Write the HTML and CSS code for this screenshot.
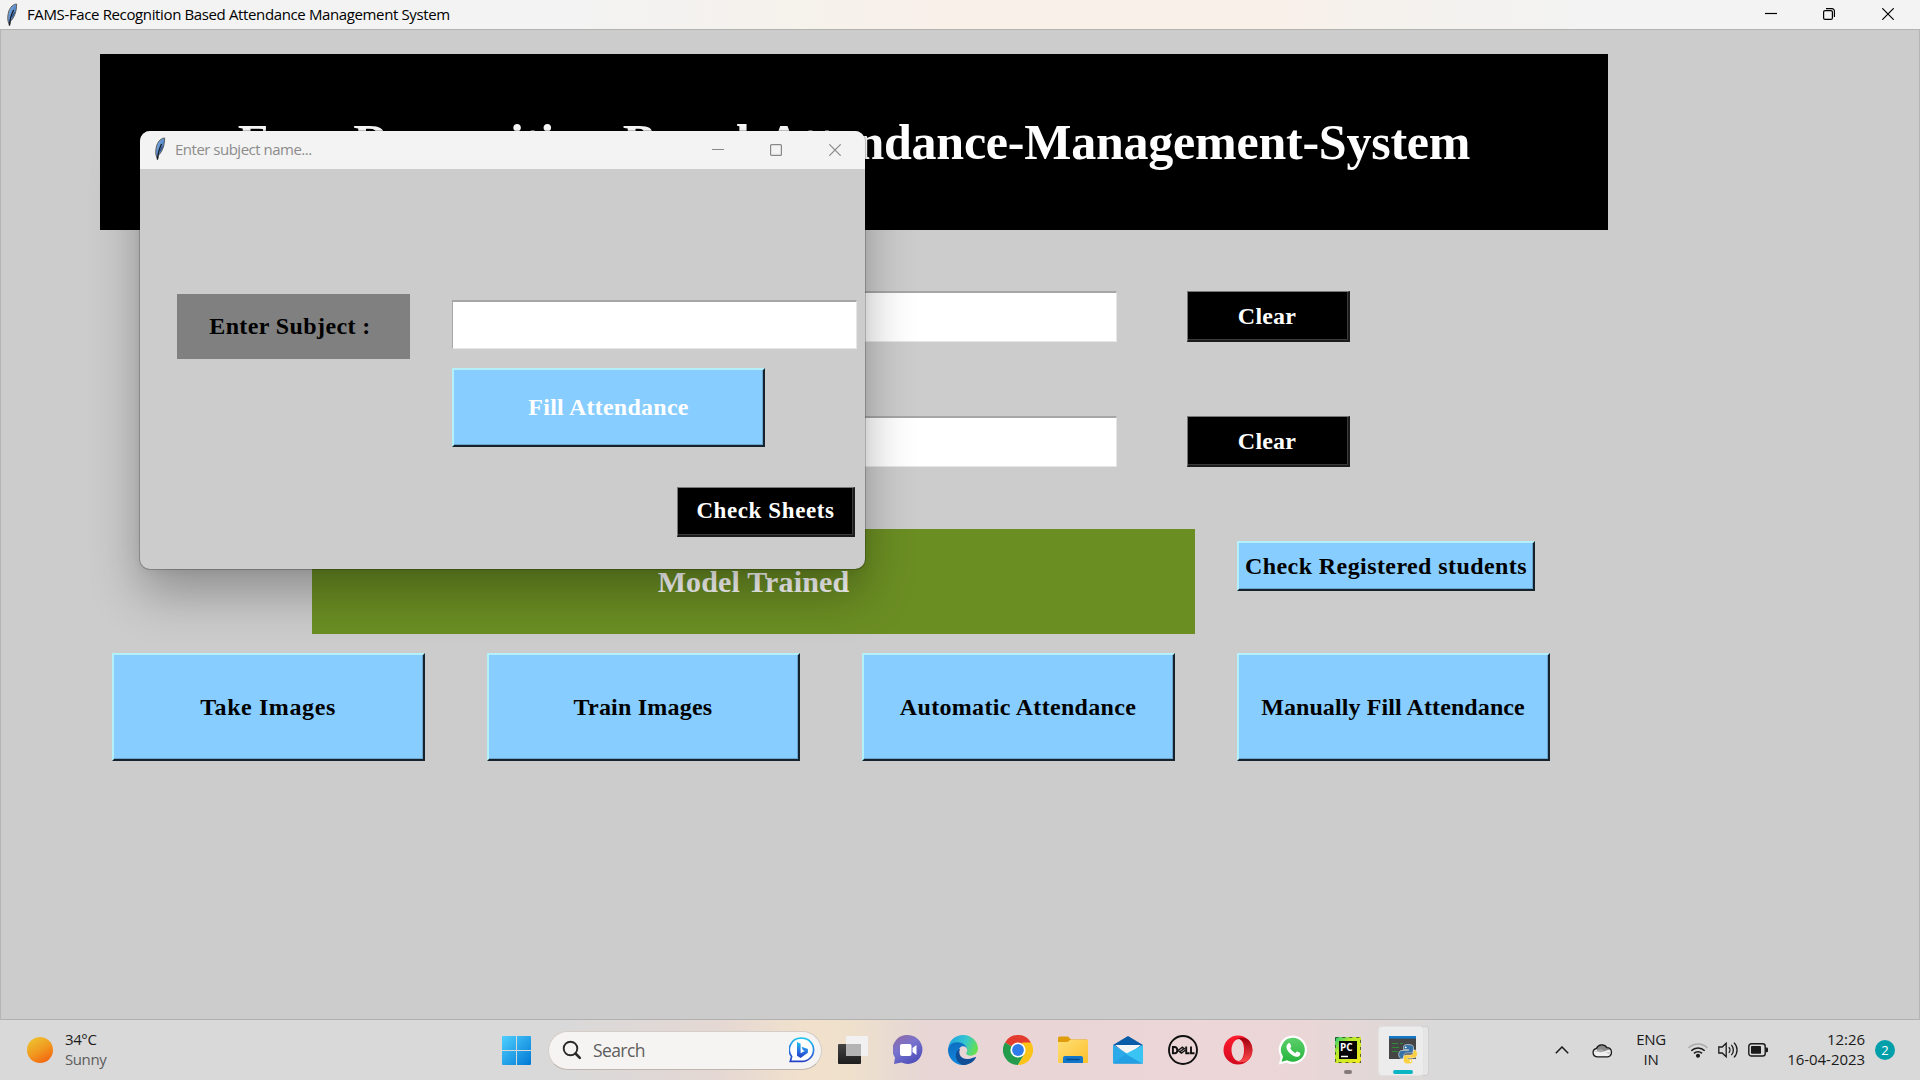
FILE: index.html
```html
<!DOCTYPE html>
<html lang="en">
<head>
<meta charset="utf-8">
<title>FAMS-Face Recognition Based Attendance Management System</title>
<link rel="stylesheet" href="styles.css">
</head>
<body>
<svg width="0" height="0" class="defs" aria-hidden="true">
  <defs>
    <linearGradient id="quill" x1="0" y1="0" x2="1" y2="1"><stop offset="0" stop-color="#8db8e8"/><stop offset="1" stop-color="#2a62ad"/></linearGradient>
    <symbol id="feather" viewBox="0 0 12 24">
      <path d="M10.600 1C7.500 1 4.300 4 2.900 8 1.800 11.500 1.400 15 2 18L3.400 22.500l1.200-4.400C7.700 15.500 10.900 8.500 10.600 1z" fill="url(#quill)" stroke="#555" stroke-width=".9"/>
      <path d="M7.600 7C5.500 11 4 15 3.500 22.500" fill="none" stroke="#161b26" stroke-width="1.300"/>
      <path d="M8.500 9.500 6 14" stroke="#1c3a66" stroke-width=".9"/>
    </symbol>
  </defs>
</svg>
<div class="desktop">
  <header class="titlebar">
    <svg class="feather" width="12" height="24"><use href="#feather"/></svg>
    <span class="titlebar-text">FAMS-Face Recognition Based Attendance Management System</span>
    <div class="controls">
      <svg width="12" height="12" viewBox="0 0 12 12"><path d="M0 5.500h12"/></svg>
      <svg width="12" height="12" viewBox="0 0 12 12"><rect x=".6" y="2.600" width="8.800" height="8.800" rx="1.500"/><path d="M3 .6h6a2.400 2.400 0 0 1 2.400 2.400v6"/></svg>
      <svg width="12" height="12" viewBox="0 0 12 12"><path d="M.3.3l11.400 11.400M11.700.3.3 11.700"/></svg>
    </div>
  </header>

  <main class="app">
    <h1 class="banner"><span>Face-Recognition-Based-Attendance-Management-System</span></h1>
    <div class="entry-row first"><div class="entry"></div><button class="btn dark clear">Clear</button></div>
    <div class="entry-row second"><div class="entry"></div><button class="btn dark clear">Clear</button></div>
    <div class="status-row">
      <div class="status">Model Trained</div>
      <button class="btn sky registered">Check Registered students</button>
    </div>
    <div class="actions">
      <button class="btn sky take">Take Images</button>
      <button class="btn sky train">Train Images</button>
      <button class="btn sky auto">Automatic Attendance</button>
      <button class="btn sky manual">Manually Fill Attendance</button>
    </div>
  </main>

  <section class="dialog">
    <div class="dialog-bar">
      <svg class="feather" width="12" height="24"><use href="#feather"/></svg>
      <span class="dialog-title">Enter subject name...</span>
      <div class="controls">
        <svg width="12" height="12" viewBox="0 0 12 12"><path d="M0 5.500h12"/></svg>
        <svg width="12" height="12" viewBox="0 0 12 12"><rect x=".6" y=".6" width="10.800" height="10.800" rx="1"/></svg>
        <svg width="12" height="12" viewBox="0 0 12 12"><path d="M.3.3l11.400 11.400M11.700.3.3 11.700"/></svg>
      </div>
    </div>
    <div class="dialog-body">
      <div class="field"><label class="subject">Enter Subject :</label><div class="entry small"></div></div>
      <button class="btn sky fill">Fill Attendance</button>
      <button class="btn dark sheets">Check Sheets</button>
    </div>
  </section>

  <footer class="taskbar">
    <div class="weather">
      <div class="sun"></div>
      <div class="lines"><span>34°C</span><span class="muted">Sunny</span></div>
    </div>
    <div class="dock">
      <div class="cell start">
        <svg width="29" height="29" viewBox="0 0 29 29"><defs><linearGradient id="win" x1="0" y1="0" x2="1" y2="1" gradientUnits="objectBoundingBox"><stop offset="0" stop-color="#4fd0ff"/><stop offset="1" stop-color="#0078d4"/></linearGradient></defs><path fill="url(#win)" d="M1 0h13v14H0V1a1 1 0 0 1 1-1zM15 0h13a1 1 0 0 1 1 1v13H15zM0 15h14v14H1a1 1 0 0 1-1-1zM15 15h14v13a1 1 0 0 1-1 1H15z"/></svg>
      </div>
      <div class="search">
        <svg width="20" height="20" viewBox="0 0 20 20" fill="none" stroke="#2a2a2a" stroke-linecap="round"><circle cx="8.500" cy="8.500" r="6.800" stroke-width="1.900"/><path d="M13.500 13.500l4.300 4.300" stroke-width="2.600"/></svg>
        <span>Search</span>
        <svg class="bing" width="26" height="26" viewBox="0 0 26 26"><defs><linearGradient id="bing" x1=".5" y1="0" x2=".4" y2="1"><stop offset="0" stop-color="#22c5ee"/><stop offset=".6" stop-color="#2a6fe0"/><stop offset="1" stop-color="#2440c4"/></linearGradient></defs><path d="M13 1.200a11.600 11.600 0 1 1 0 23.200H1.300l1.300-4.800A11.600 11.600 0 0 1 13 1.200z" fill="#fff" stroke="url(#bing)" stroke-width="1.700"/><path d="M8 5l3.600 1.400v9.900L15.800 14l-2-1-1.200-3.200 6.300 2.300v3.700L11.600 21 8 18.700z" fill="url(#bing)"/></svg>
      </div>
      <div class="cell"><svg width="30" height="30" viewBox="0 0 30 30"><defs><linearGradient id="tv" x1="0" y1="0" x2="0" y2="1"><stop offset="0" stop-color="#444"/><stop offset="1" stop-color="#1d1d1d"/></linearGradient></defs><rect x="0" y="9" width="23" height="20" rx="1" fill="url(#tv)"/><rect x="8" y="1" width="22" height="20" rx="1" fill="#f1f1f1"/><path d="M8 9h15v12H8z" fill="#b4b4b4"/></svg></div>
      <div class="cell"><svg width="30" height="30" viewBox="0 0 30 30"><defs><linearGradient id="chat" x1=".2" y1="0" x2=".8" y2="1"><stop offset="0" stop-color="#8e6aa8"/><stop offset=".4" stop-color="#7873cf"/><stop offset="1" stop-color="#494bb8"/></linearGradient></defs><path d="M15 0a14.500 14.500 0 1 1-6.500 27.500L1 29l1-6.500A14.500 14.500 0 0 1 15 0z" fill="url(#chat)"/><rect x="7" y="9" width="11.500" height="12" rx="2" fill="#fff"/><path d="M19.500 13l4-3v10l-4-3z" fill="#fff"/></svg></div>
      <div class="cell"><svg width="30" height="30" viewBox="0 0 30 30"><defs><linearGradient id="ed1" x1="0" y1=".2" x2="1" y2=".5"><stop offset="0" stop-color="#1e9fe0"/><stop offset=".55" stop-color="#36c6d0"/><stop offset="1" stop-color="#66e04e"/></linearGradient><linearGradient id="ed2" x1="0" y1="0" x2=".3" y2="1"><stop offset="0" stop-color="#0d6abf"/><stop offset="1" stop-color="#1188dc"/></linearGradient></defs><path d="M.3 12.500C1.500 5 7.500 0 15 0c8.600 0 15 6.400 15 13.600 0 4.400-3.500 7.100-7.200 7.100-3.300 0-5-1.400-4.600-2.400.6-1 1-1.700 1-3.200 0-3.600-4-6.600-8.600-6.600C6 8.500 1.500 10.200.3 12.500z" fill="url(#ed1)"/><path d="M0 15C0 10.800 4.200 7.300 9.500 7.300c5 0 9 3 9.600 6.700-.8-2-2.500-2.700-3.900-2.700-3 0-4.700 2.600-4.700 5.700 0 6 5.200 10 10 9.800-1.700 2-3.700 3.200-5.700 3.200C6.500 30 0 23 0 15z" fill="url(#ed2)"/><path d="M12.300 13.500c-3 6 1.500 11 7.700 10.500 3.200-.3 6-1.400 7.300-2 .6-.2.900.2.600.7-2.300 4.200-7 7.300-12.900 7.300-4.500-1.200-7.600-5.500-7.200-10 .3-3 2-5.500 4.500-6.500z" fill="#104f98"/></svg></div>
      <div class="cell"><svg width="30" height="30" viewBox="0 0 30 30"><path d="M15 15 2 7.500A15 15 0 0 1 28 7.500z" fill="#e33b2e"/><path d="M15 15 2 7.500A15 15 0 0 0 15 30l6.500-11.200z" fill="#259b4c"/><path d="M28 7.500A15 15 0 0 1 15 30l7-12-3-10.500z" fill="#fcc419"/><circle cx="15" cy="15" r="7.600" fill="#fff"/><circle cx="15" cy="15" r="5.900" fill="#2f7bea"/></svg></div>
      <div class="cell"><svg width="30" height="28" viewBox="0 0 30 28"><defs><linearGradient id="fo" x1="0" y1="0" x2="1" y2="1"><stop offset="0" stop-color="#ffdf75"/><stop offset="1" stop-color="#fbc02d"/></linearGradient></defs><path d="M0 2q0-1.500 1.500-1.500H10l3 3h15.500Q30 3.500 30 5v6H0z" fill="#df9c0b"/><path d="M0 6h9.500l3-2.300H29q1 0 1 1V26q0 1-1 1H1q-1 0-1-1z" fill="url(#fo)"/><path d="M5 27v-5q0-2 2-2h16q2 0 2 2v5z" fill="#1277cb"/><path d="M8.500 23.500h13" stroke="#074a86" stroke-width="1.500"/></svg></div>
      <div class="cell"><svg width="30" height="28" viewBox="0 0 30 28"><path d="M0 9 15 0l15 9-15 9z" fill="#0a5ba8"/><path d="M2 9h26l-13 10z" fill="#f5f5f5"/><path d="M0 9l30 18.500H1q-1 0-1-1z" fill="#2aaae8"/><path d="M30 9v17.500q0 1-1 1L12.500 18z" fill="#39c4f3"/><path d="M12.500 18 30 28H0z" fill="#1f98e0" opacity=".6"/></svg></div>
      <div class="cell"><svg width="30" height="30" viewBox="0 0 30 30" fill="none" stroke="#111"><circle cx="15" cy="15" r="14" stroke-width="1.900"/><g stroke-width="1.900"><path d="M4.900 12v6.300h1.600q2.800 0 2.800-3.150T6.500 12zM18.200 11.500v6.800h3.400M23 11.500v6.800h3.500"/><path d="M10 15.500l4.600-3.500M11.600 17l4.600-3.500M13 18.500l4.500-3.500M10 15.500l3.500 2.700M14 12l3 2" stroke-width="1.500"/></g></svg></div>
      <div class="cell"><svg width="30" height="30" viewBox="0 0 30 30"><defs><linearGradient id="op" x1="0" y1="0" x2="0" y2="1"><stop offset="0" stop-color="#ff1b2d"/><stop offset="1" stop-color="#d3091e"/></linearGradient><linearGradient id="op2" x1="0" y1="0" x2="0" y2="1"><stop offset="0" stop-color="#a00010"/><stop offset="1" stop-color="#ff4b4b"/></linearGradient></defs><path fill="url(#op)" fill-rule="evenodd" d="M15 .5a14.500 14.500 0 1 0 0 29 14.500 14.500 0 0 0 0-29zM15.500 4c3.500 0 5.500 5 5.500 11s-2 11-5.500 11S8.500 21 8.500 15s3.500-11 7-11z"/><path fill="url(#op2)" d="M12.500 5q2-2 5-2.200 7-.3 9.500 4 2.300 3.700 2.300 8.200T27 23q-3 4.300-9.500 4.300-3 0-5-2.300 2 1.300 4 1 5.500-2 5.500-11t-5.500-11q-2-.3-4 1z"/></svg></div>
      <div class="cell"><svg width="30" height="30" viewBox="0 0 30 30"><defs><linearGradient id="wa" x1="0" y1="0" x2="0" y2="1"><stop offset="0" stop-color="#5dd06a"/><stop offset="1" stop-color="#27b43e"/></linearGradient></defs><path d="M15 .5A14.300 14.300 0 1 1 8.500 27.700L.8 29.500l2-7.300A14.300 14.300 0 0 1 15 .5z" fill="#fff"/><path d="M15 2.800A12 12 0 1 1 9 25.300L3.600 26.700 5 21.500A12 12 0 0 1 15 2.800z" fill="url(#wa)"/><path d="M10.500 8.300c.8-.5 1.400-.2 1.700.5l1 2.300c.2.700-.2 1.200-1 2 1.200 2.400 3 4 5.300 5 .8-1 1.200-1.800 1.900-1.500l2.500 1.200c1 .5.300 2.800-.9 3.500-1.500.9-3.600.7-6.500-1-3-1.700-5.300-4.700-5.900-7-.5-2 .5-4.100 1.900-5z" fill="#fff"/></svg></div>
      <div class="cell open"><svg width="26" height="26" viewBox="0 0 26 26"><defs><linearGradient id="py" x1="0" y1="0" x2="1" y2="1"><stop offset="0" stop-color="#27c97a"/><stop offset=".35" stop-color="#b9e92c"/><stop offset="1" stop-color="#f4ea1e"/></linearGradient></defs><path d="M0 0h26v26H0z" fill="url(#py)"/><path d="M.3.3h25.400v25.400H.3z" fill="none" stroke="#15201a" stroke-width=".8" stroke-dasharray="3 4"/><path d="M4 4h18v18H4z" fill="#050505"/><path d="M6 19.500h7" stroke="#fff" stroke-width="1.500"/><text x="5" y="13.500" class="pc">PC</text></svg></div>
      <div class="cell active"><svg width="29" height="28" viewBox="0 0 29 28"><path d="M0 0h27v23H0z" fill="#454545"/><path d="M0 0h27v2.500H0z" fill="#1479ca"/><path d="M3 7.500h6M11 7.500h3M3 11.500h7M3 15.500h6" stroke="#2f8a35" stroke-width="1.200"/><path d="M18.500 8.500c-3.500 0-4 1.500-4 3v2h5v1h-6.500c-2.400 0-3.300 1.800-3.300 4s1 4 3 4h2v-2.500c0-2 1.500-3 3.200-3h4c1.600 0 2.600-1.200 2.600-2.700v-3c0-1.700-1.500-2.800-6-2.800z" fill="#3672a6" stroke="#eee" stroke-width=".6"/><path d="M19.500 27.800c3.500 0 4-1.400 4-2.900v-2h-5v-1H25c2.400 0 3.300-1.700 3.300-3.900s-1-4-3-4h-1v2c0 2-1.500 3-3.200 3h-4c-1.600 0-2.600 1.200-2.600 2.700v3c0 1.900 1.500 3.100 5 3.100z" fill="#fcd03f" stroke="#eee" stroke-width=".6"/><circle cx="16.700" cy="11.300" r=".9" fill="#fff"/><circle cx="21.500" cy="25" r=".9" fill="#fff"/></svg></div>
    </div>
    <div class="tray">
      <svg class="chev" width="14" height="8" viewBox="0 0 14 8"><path d="M.8 7.200 7 1l6.200 6.200" fill="none" stroke="#1a1a1a" stroke-width="1.500"/></svg>
      <svg class="cloud" width="21" height="15" viewBox="0 0 21 15"><path d="M5 13.800a4.200 4.200 0 0 1-.6-8.300A6 6 0 0 1 15 4.700a4.600 4.600 0 0 1 .8 9.100z" fill="#f0f0f0"/><path d="M4.400 5.500A6 6 0 0 1 15 4.700l3.500 1.500-10 3-3-1z" fill="#8a8a8a"/><path d="M1 9l8-3 9 6V9z" fill="#bbb" opacity=".6"/><path d="M5 13.800a4.200 4.200 0 0 1-.6-8.300A6 6 0 0 1 15 4.700a4.600 4.600 0 0 1 .8 9.100z" fill="none" stroke="#1a1a1a" stroke-width="1.300"/></svg>
      <div class="lines lang"><span>ENG</span><span>IN</span></div>
      <svg class="wifi" width="20" height="16" viewBox="0 0 20 16" fill="none" stroke="#1a1a1a" stroke-width="1.500"><path d="M.6 6a13.300 13.300 0 0 1 18.800 0" stroke="#aaa"/><path d="M3.300 8.700a9.500 9.500 0 0 1 13.400 0M6 11.400a5.700 5.700 0 0 1 8 0"/><circle cx="10" cy="13.700" r="1.300" fill="#1a1a1a"/></svg>
      <svg class="vol" width="21" height="18" viewBox="0 0 21 18" fill="none" stroke="#1a1a1a" stroke-width="1.300"><path d="M.8 6h3.400l4-3.800v13.600l-4-3.800H.8zM10.800 6.200a4 4 0 0 1 0 5.600M13.300 3.900a7.300 7.300 0 0 1 0 10.200M16 1.600a10.500 10.500 0 0 1 0 14.800"/></svg>
      <svg class="bat" width="21" height="14" viewBox="0 0 21 14"><rect x=".8" y=".8" width="16.400" height="12.200" rx="2.600" fill="none" stroke="#1a1a1a" stroke-width="1.400"/><rect x="3" y="3" width="10" height="7.800" rx=".8" fill="#1a1a1a"/><path d="M17.500 4.500h1.200q1.300 0 1.300 1.200v2.400q0 1.200-1.300 1.200h-1.200z" fill="#1a1a1a"/></svg>
      <div class="lines clock"><span>12:26</span><span>16-04-2023</span></div>
      <div class="badge">2</div>
    </div>
  </footer>
</div>
</body>
</html>
```

FILE: styles.css
```css
* { box-sizing: border-box; }
body { margin: 0; font-family: "Open Sans", "Noto Sans", sans-serif; }
.defs { position: absolute; }
.desktop {
  position: relative; width: 1920px; height: 1080px; overflow: hidden;
  display: flex; flex-direction: column; background: #ccc;
}

/* Window title bars */
.titlebar {
  height: 30px; display: flex; align-items: center; padding: 0 26px 0 6px;
  border-bottom: 1px solid #b3b3b0;
  background: linear-gradient(90deg, #f3f3f3 580px, #f6f2ec 800px, #faf0ea 960px, #faf0ea 1280px, #f5f2ed 1370px, #f3f3f3 1580px);
}
.titlebar-text { margin-left: 9px; font-size: 15px; line-height: 29px; color: #000; letter-spacing: -.37px; white-space: nowrap; }
.controls { margin-left: auto; display: flex; gap: 46px; }
.controls svg { fill: none; stroke: #000; stroke-width: 1.200; }
.controls svg:last-child { margin-left: 1px; }
.titlebar .controls { margin-top: -2px; }

/* Main window */
.app {
  height: 991px; display: flex; flex-direction: column;
  border: 1px solid #b5b5b5; border-top: 0; border-bottom: 2px solid #b0b0b0;
  background: #ccc; font-family: "Liberation Serif", "Times New Roman", serif; font-weight: bold;
}
.banner {
  margin: 24px 0 0 99px; width: 1508px; height: 176px; background: #000; color: #fff;
  font-size: 50px; letter-spacing: -.23px;
  display: flex; align-items: center; justify-content: center; white-space: nowrap;
}
.btn {
  margin: 0; padding: 0; border: 2px solid; font: bold 24px "Liberation Serif", "Times New Roman", serif;
  text-align: center; white-space: nowrap;
}
.sky { background: #87cdff; color: #000; border-color: #b4f0fa #16222c #16222c #b4f0fa; box-shadow: inset -1px -1px #6aa5d0; }
.dark { background: #000; color: #fff; border-color: #777 #1c1c1c #1c1c1c #777; border-width: 1px 2px 2px 1px; box-shadow: inset -1px -1px #3a3a3a; }
.entry { background: #fff; border: 1px solid; border-color: #a6a6a6 #e6e6e6 #e6e6e6 #a6a6a6; border-top-width: 2px; }
.entry-row { display: flex; padding-left: 672px; gap: 70px; }
.entry-row .entry { width: 444px; height: 51px; }
.first { margin-top: 61px; }
.second { margin-top: 74px; }
.clear { width: 163px; height: 51px; letter-spacing: .2px; padding-right: 2px; }
.status-row { display: flex; align-items: flex-start; margin-top: 62px; padding-left: 311px; gap: 42px; }
.status {
  width: 883px; height: 105px; background: #6b8e23; color: #fff; font-size: 30px; letter-spacing: .15px;
  display: flex; align-items: center; justify-content: center;
}
.registered { width: 298px; height: 50px; margin-top: 12px; letter-spacing: .42px; }
.actions { display: flex; gap: 62px; margin: 19px 0 0 111px; }
.actions .btn { width: 313px; height: 108px; padding-right: 1px; }
.take { letter-spacing: .6px; }
.train { letter-spacing: .22px; }
.auto { letter-spacing: .32px; }
.manual { letter-spacing: .1px; }

/* Floating subject dialog */
.dialog {
  position: absolute; left: 140px; top: 131px; width: 725px; height: 438px; border-radius: 10px;
  background: #ccc; overflow: hidden; font-family: "Liberation Serif", "Times New Roman", serif; font-weight: bold;
  box-shadow: 0 0 0 1px rgba(0,0,0,.2), 0 24px 50px rgba(0,0,0,.3), 0 2px 10px rgba(0,0,0,.06);
}
.dialog-bar { height: 38px; display: flex; align-items: center; padding: 0 24px 0 14px; background: #f3f3f3; }
.dialog-bar .feather { margin-top: -2px; }
.dialog-title { margin: -2px 0 0 9px; font: 15px/36px "Open Sans", "Noto Sans", sans-serif; letter-spacing: -.5px; color: #8c8c8c; }
.dialog .controls svg { stroke: #888; }
.dialog-body { display: flex; flex-direction: column; align-items: flex-start; padding: 125px 0 0 37px; }
.field { display: flex; gap: 42px; align-items: flex-start; }
.subject {
  width: 233px; height: 65px; padding-right: 7px; background: #808080; font-size: 24px; letter-spacing: .4px;
  line-height: 65px; text-align: center;
}
.small { width: 405px; height: 49px; margin-top: 6px; }
.fill { width: 313px; height: 79px; margin: 9px 0 0 275px; color: #fff; letter-spacing: .25px; }
.sheets { width: 178px; height: 50px; margin: 40px 0 0 500px; padding-bottom: 1px; font-size: 23px; letter-spacing: .6px; }

/* Taskbar */
.taskbar {
  height: 60px; margin-top: -1px; display: flex; align-items: center; position: relative;
  background: linear-gradient(90deg, #d9d9d9 560px, #dfd8d6 650px, #e5d8d3 720px, #f1e1cb 810px, #efe0cc 850px, #e8dad2 900px, #e8d5d6 930px, #ecd6d7 1200px, #ebd6d7 1300px, #e2d7d7 1370px, #d9d9d9 1440px);
}
.lines { display: flex; flex-direction: column; margin-top: -2px; font-size: 15px; line-height: 20px; color: #1b1b1b; }
.muted { color: #5c5c5c; }
.weather { display: flex; align-items: center; gap: 12px; padding-left: 27px; width: 489px; }
.sun { width: 26px; height: 26px; border-radius: 50%; background: linear-gradient(150deg, #eec12f 10%, #f19a20 50%, #f2640f 90%); }
.weather .lines { letter-spacing: -.4px; }
.dock { display: flex; align-items: center; }
.cell { width: 55px; height: 48px; display: flex; align-items: center; justify-content: center; position: relative; }
.search {
  width: 274px; height: 39px; margin: 0 3px 0 4px; border-radius: 20px; padding: 0 6px 0 13px;
  display: flex; align-items: center; background: #f6f4f3; border: 1px solid #d5cdc8; border-bottom-color: #c0b5ad;
}
.search span { font-size: 17.500px; margin-left: 11px; color: #5e5e5e; letter-spacing: -.6px; }
.bing { margin-left: auto; }
.pc { font: bold 10px "Open Sans", sans-serif; fill: #fff; }
.open::after, .active::after { content: ""; position: absolute; bottom: 0; height: 4px; border-radius: 2px; }
.open::after { width: 8px; background: #857b7b; }
.active::after { width: 20px; background: #0bb5c4; left: 18px; }
.active::before {
  content: ""; position: absolute; left: 3px; top: 0; width: 44px; height: 48px; border-radius: 4px;
  background: #ececec; border: 1px solid #e2e2e2; box-shadow: 5px 0 0 -1px #e6e6e6, 5px 0 0 #cfcfcf;
}
.active svg { position: relative; left: 1px; }
.tray { margin-left: auto; display: flex; align-items: center; padding-right: 25px; }
.cloud { margin-left: 23px; }
.lang { margin-left: 21px; width: 34px; align-items: center; letter-spacing: -.3px; }
.wifi { margin-left: 20px; }
.vol { margin-left: 10px; }
.bat { margin-left: 9px; }
.clock { align-items: flex-end; width: 96px; letter-spacing: -.05px; }
.badge {
  width: 20px; height: 20px; margin-left: 10px; border-radius: 50%; background: #009faa; color: #fff;
  font-size: 13px; line-height: 20px; text-align: center;
}
```
